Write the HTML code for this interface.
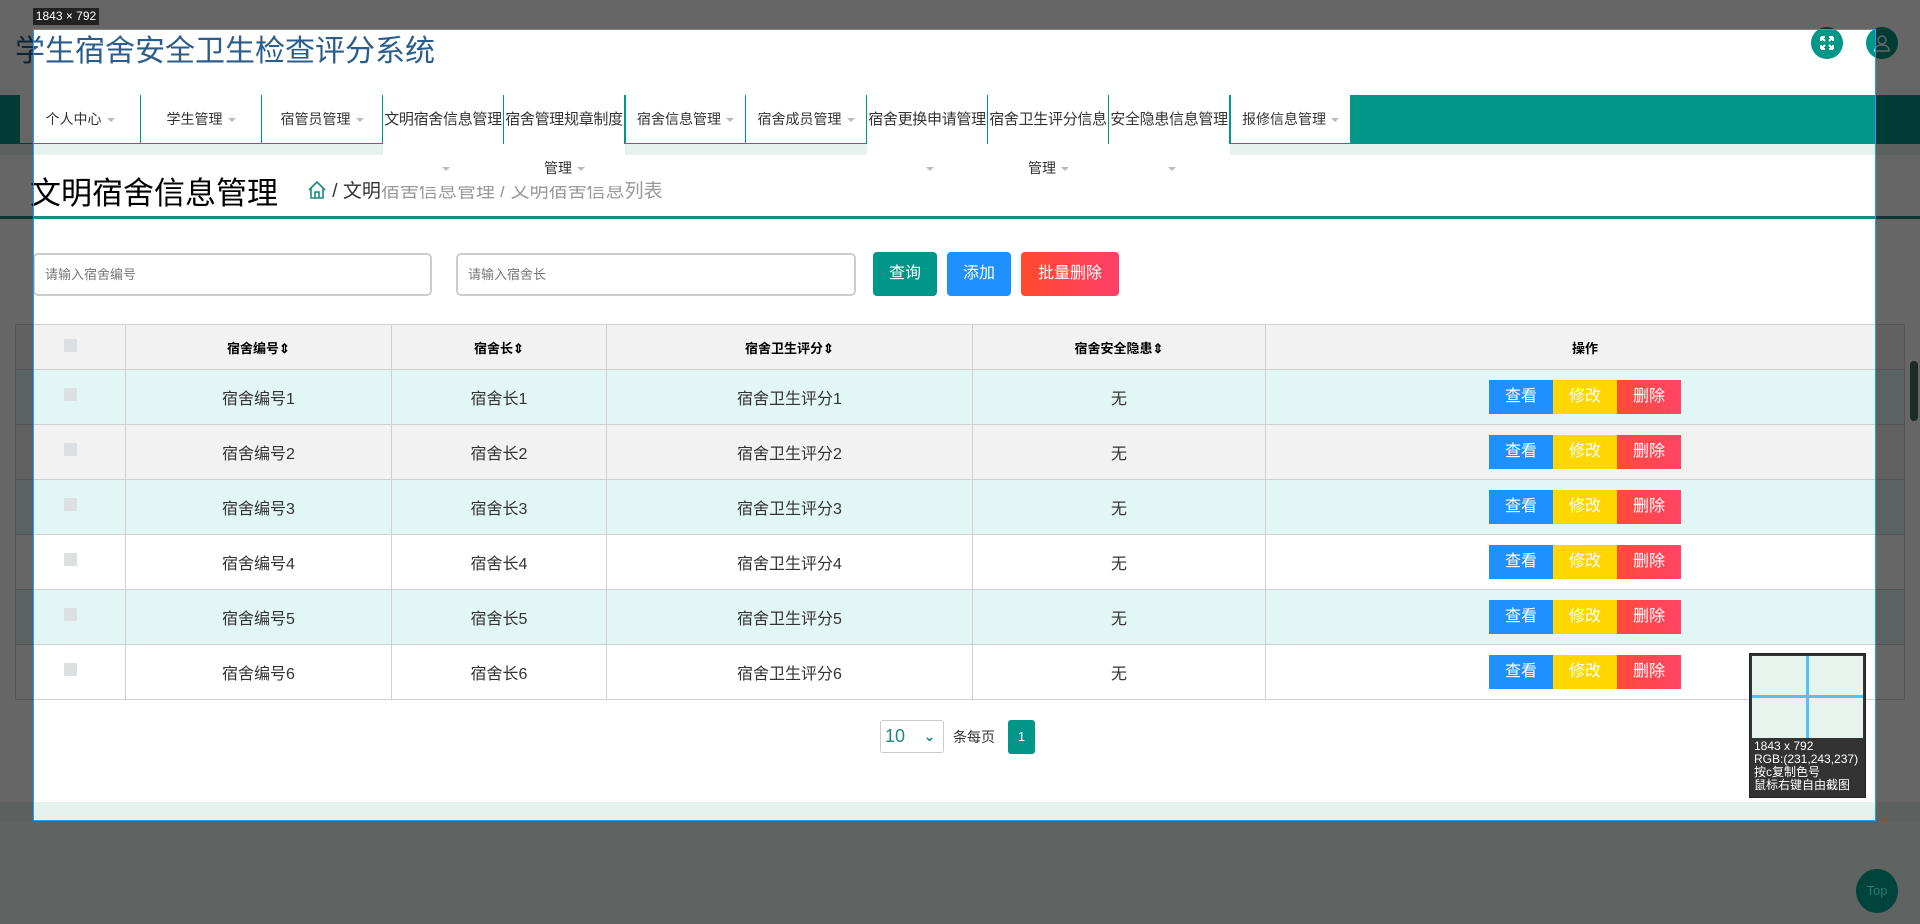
<!DOCTYPE html>
<html><head><meta charset="utf-8"><style>
*{box-sizing:border-box;margin:0;padding:0}
body{width:1920px;height:924px;overflow:hidden;background:#eef7f3;font-family:"Liberation Sans","Noto Sans CJK SC",sans-serif;position:relative;color:#333}
.abs{position:absolute}
.page{position:absolute;left:0;top:0;width:1920px;height:802px;background:#fff}
.strip{position:absolute;left:0;top:802px;width:1920px;height:19px;background:#e6f2ee}
.title{left:15px;top:26px;font-size:30px;color:#2a5d8c}
.circ{width:32px;height:32px;border-radius:50%;background:#009688}
.nav{left:0;top:95px;width:1920px;height:49px;background:#009688}
.navstrip{left:0;top:144px;width:1920px;height:11px;background:#e6f2ee}
.it{position:absolute;top:95px;height:49px;background:#fff;border-right:1px solid #009688;border-bottom:1px solid #009688;font-size:14px;text-align:center;line-height:49px;color:#333;white-space:nowrap}
.it.two{border-bottom:none;font-size:15px;letter-spacing:-0.3px;overflow:visible}
.ext{position:absolute;top:144px;height:42px;background:#fff;font-size:14px;text-align:center;line-height:20px;padding-top:14px;color:#333}
.tri{display:inline-block;width:0;height:0;border-left:4px solid transparent;border-right:4px solid transparent;border-top:4px solid #bbb;vertical-align:middle;margin-left:5px}
.h1{left:30px;top:168px;font-size:31px;color:#000}
.bc{left:307px;top:176px;font-size:19px;color:#333}
.line{left:0;top:216px;width:1920px;height:3px;background:#1a8a7f}
.inp{top:253px;height:43px;border:2px solid #ccc;border-radius:5px;font-size:13px;color:#777;padding-left:10px;line-height:39px}
.btn{top:252px;height:44px;border-radius:4px;color:#fff;font-size:16px;text-align:center;line-height:44px}
table{position:absolute;left:15px;top:324px;width:1890px;border-collapse:collapse;font-size:16px;color:#333}
td,th{border:1px solid #d0d0d0;text-align:center;height:55px}
th{height:45px;font-size:13px;color:#000;background:#f2f2f2}
.cb{display:inline-block;width:13px;height:13px;background:#dde0e3}
.ab{display:inline-block;width:64px;height:34px;line-height:34px;color:#fff;font-size:16px;vertical-align:middle}
.sel{left:33px;top:29px;width:1843px;height:792px;border:1px solid #1e9fff;box-shadow:0 0 0 3000px rgba(0,0,0,.6)}
</style></head><body>
<div class="page"></div>
<div class="strip"></div>
<div class="abs title">学生宿舍安全卫生检查评分系统</div>
<div class="abs circ" style="left:1811px;top:27px"></div>
<svg class="abs" style="left:1817px;top:33px" width="20" height="20" viewBox="0 0 20 20" fill="none" stroke="#fff" stroke-width="2"><path d="M4 4l4 4M4 4h4M4 4v4M16 4l-4 4M16 4h-4M16 4v4M4 16l4-4M4 16h4M4 16v-4M16 16l-4-4M16 16h-4M16 16v-4"/></svg>
<div class="abs circ" style="left:1866px;top:27px"></div>
<svg class="abs" style="left:1872px;top:33px" width="20" height="20" viewBox="0 0 20 20" fill="none" stroke="#fff" stroke-width="1.5"><circle cx="10" cy="7" r="4"/><path d="M3 18c0-4 3-6 7-6s7 2 7 6z"/></svg>

<div class="abs bc"><svg width="20" height="20" viewBox="0 0 20 20" fill="none" stroke="#1a8a7f" stroke-width="1.6" style="vertical-align:-3px"><path d="M2 10L10 2l8 8M4 8v10h12V8M8 18v-6h4v6"/></svg> / 文明<span style="color:#999">宿舍信息管理 / 文明宿舍信息列表</span></div>
<div class="abs h1">文明宿舍信息管理</div>
<div class="abs line"></div>

<div class="abs nav"></div>
<div class="abs navstrip"></div>
<div class="it" style="left:20px;width:121px">个人中心<span class="tri"></span></div>
<div class="it" style="left:141px;width:121px">学生管理<span class="tri"></span></div>
<div class="it" style="left:262px;width:121px">宿管员管理<span class="tri"></span></div>
<div class="it two" style="left:383px;width:121px">文明宿舍信息管理</div>
<div class="it two" style="left:504px;width:121px">宿舍管理规章制度</div>
<div class="ext" style="left:383px;width:121px"><span class="tri"></span></div>
<div class="ext" style="left:504px;width:121px">管理<span class="tri"></span></div>
<div class="it" style="left:625px;width:121px;border-left:1px solid #009688">宿舍信息管理<span class="tri"></span></div>
<div class="it" style="left:746px;width:121px">宿舍成员管理<span class="tri"></span></div>
<div class="it two" style="left:867px;width:121px">宿舍更换申请管理</div>
<div class="it two" style="left:988px;width:121px">宿舍卫生评分信息</div>
<div class="it two" style="left:1109px;width:121px">安全隐患信息管理</div>
<div class="ext" style="left:867px;width:121px"><span class="tri"></span></div>
<div class="ext" style="left:988px;width:121px">管理<span class="tri"></span></div>
<div class="ext" style="left:1109px;width:121px"><span class="tri"></span></div>
<div class="it" style="left:1230px;width:121px;border-left:1px solid #009688">报修信息管理<span class="tri"></span></div>

<div class="abs inp" style="left:33px;width:399px">请输入宿舍编号</div>
<div class="abs inp" style="left:456px;width:400px">请输入宿舍长</div>
<div class="abs btn" style="left:873px;width:64px;background:#009688">查询</div>
<div class="abs btn" style="left:947px;width:64px;background:#1e90ff">添加</div>
<div class="abs btn" style="left:1021px;width:98px;background:linear-gradient(90deg,#ff4a2e,#ff3f6a)">批量删除</div>

<table>
<tr><th style="width:110px"><span class="cb"></span></th><th style="width:266px">宿舍编号⇕</th><th style="width:215px">宿舍长⇕</th><th style="width:366px">宿舍卫生评分⇕</th><th style="width:293px">宿舍安全隐患⇕</th><th>操作</th></tr>
<tr style="background:#e3f6f6"><td><span class="cb"></span></td><td>宿舍编号1</td><td>宿舍长1</td><td>宿舍卫生评分1</td><td>无</td><td><span class="ab" style="background:#1e90ff">查看</span><span class="ab" style="background:#ffd700">修改</span><span class="ab" style="background:linear-gradient(90deg,#ff4a3a,#ff4466)">删除</span></td></tr>
<tr style="background:#f2f2f2"><td><span class="cb"></span></td><td>宿舍编号2</td><td>宿舍长2</td><td>宿舍卫生评分2</td><td>无</td><td><span class="ab" style="background:#1e90ff">查看</span><span class="ab" style="background:#ffd700">修改</span><span class="ab" style="background:linear-gradient(90deg,#ff4a3a,#ff4466)">删除</span></td></tr>
<tr style="background:#e3f6f6"><td><span class="cb"></span></td><td>宿舍编号3</td><td>宿舍长3</td><td>宿舍卫生评分3</td><td>无</td><td><span class="ab" style="background:#1e90ff">查看</span><span class="ab" style="background:#ffd700">修改</span><span class="ab" style="background:linear-gradient(90deg,#ff4a3a,#ff4466)">删除</span></td></tr>
<tr style="background:#fff"><td><span class="cb"></span></td><td>宿舍编号4</td><td>宿舍长4</td><td>宿舍卫生评分4</td><td>无</td><td><span class="ab" style="background:#1e90ff">查看</span><span class="ab" style="background:#ffd700">修改</span><span class="ab" style="background:linear-gradient(90deg,#ff4a3a,#ff4466)">删除</span></td></tr>
<tr style="background:#e3f6f6"><td><span class="cb"></span></td><td>宿舍编号5</td><td>宿舍长5</td><td>宿舍卫生评分5</td><td>无</td><td><span class="ab" style="background:#1e90ff">查看</span><span class="ab" style="background:#ffd700">修改</span><span class="ab" style="background:linear-gradient(90deg,#ff4a3a,#ff4466)">删除</span></td></tr>
<tr style="background:#fff"><td><span class="cb"></span></td><td>宿舍编号6</td><td>宿舍长6</td><td>宿舍卫生评分6</td><td>无</td><td><span class="ab" style="background:#1e90ff">查看</span><span class="ab" style="background:#ffd700">修改</span><span class="ab" style="background:linear-gradient(90deg,#ff4a3a,#ff4466)">删除</span></td></tr>
</table>

<div class="abs" style="left:880px;top:720px;width:64px;height:33px;border:1px solid #ccc;border-radius:3px;font-size:18px;color:#1a8a7f;line-height:31px;padding-left:4px">10<span style="position:absolute;right:8px;top:0;font-size:13px;font-weight:bold">⌄</span></div>
<div class="abs" style="left:953px;top:727px;font-size:14px;color:#333">条每页</div>
<div class="abs" style="left:1008px;top:720px;width:27px;height:34px;background:#009688;border-radius:3px;color:#fff;font-size:13px;text-align:center;line-height:34px">1</div>

<div class="abs" style="left:1749px;top:653px;width:117px;height:145px;background:#333;border:1px solid #222">
<div style="position:absolute;left:2px;top:2px;width:111px;height:82px;background:#e7f3ed"></div>
<div style="position:absolute;left:56px;top:2px;width:3px;height:82px;background:#4fc3f7"></div>
<div style="position:absolute;left:2px;top:41px;width:111px;height:3px;background:#4fc3f7"></div>
<div style="position:absolute;left:4px;top:86px;font-size:12px;color:#fff;line-height:13px">1843 x 792<br>RGB:(231,243,237)<br>按c复制色号<br>鼠标右键自由截图</div>
</div>

<div class="abs sel"></div>
<div class="abs" style="left:33px;top:8px;width:66px;height:17px;background:#222;color:#fff;font-size:12px;line-height:17px;text-align:center">1843 × 792</div>
<div class="abs" style="left:1856px;top:869px;width:42px;height:44px;border-radius:50%;background:#00443c;color:#2a7a70;font-size:13px;text-align:center;line-height:44px">Top</div>
<div class="abs" style="left:1910px;top:361px;width:8px;height:60px;border-radius:4px;background:#1d2b25"></div>
</body></html>
